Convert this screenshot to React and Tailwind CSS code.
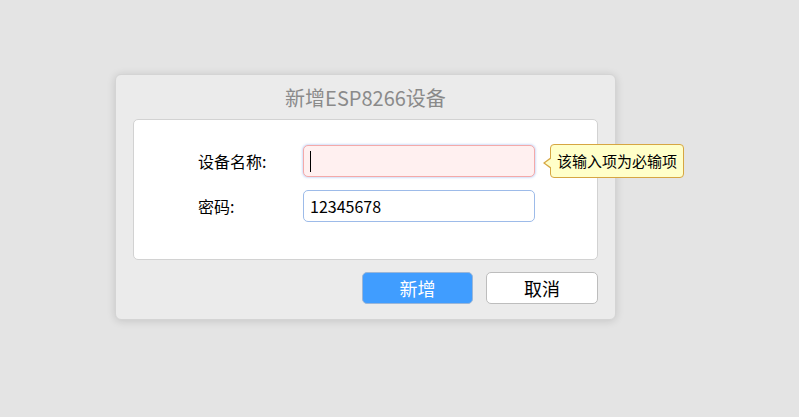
export default function App() {
  return (
    <div
      className="min-h-[417px] w-full bg-[#e4e4e4] pl-[115px] pt-[74px]"
      style={{ fontFamily: '"Noto Sans CJK SC", "Noto Sans", sans-serif' }}
    >
      <div className="w-[501px] h-[246px] rounded-[6px] border border-[#d4d4d4] bg-[#ebebeb] shadow-[0_1px_8px_rgba(0,0,0,0.14)] flex flex-col">
        <div className="h-[44px] flex items-center justify-center text-[20px] text-[#8a8a8a] leading-none pt-[2px]">
          新增ESP8266设备
        </div>

        <div className="mx-[17px] h-[141px] rounded-[5px] border border-[#d2d2d2] bg-white pt-[25px] pl-[64px] flex flex-col gap-[13px]">
          <div className="flex items-center">
            <label className="w-[105px] text-[16px] text-black">设备名称:</label>
            <div className="relative">
              <div className="w-[232px] h-[32px] rounded-[5px] border border-[#f4a9a9] bg-[#fff0f0] shadow-[0_0_2px_1px_rgba(120,160,235,0.35)] flex items-center pl-[6px]">
                <span className="w-[1px] h-[21px] bg-black" />
              </div>
              <div className="absolute left-[247px] top-[-1px] h-[34px] rounded-[4px] border border-[#d6a642] bg-[#ffffc9] px-[6px] flex items-center whitespace-nowrap text-[15px] text-black">
                <span className="absolute left-[-8px] top-[12px] w-0 h-0 border-y-[6px] border-y-transparent border-r-[8px] border-r-[#d6a642]" />
                <span className="absolute left-[-6px] top-[13px] w-0 h-0 border-y-[5px] border-y-transparent border-r-[7px] border-r-[#ffffc9]" />
                该输入项为必输项
              </div>
            </div>
          </div>

          <div className="flex items-center">
            <label className="w-[105px] text-[16px] text-black">密码:</label>
            <input
              readOnly
              value="12345678"
              className="w-[232px] h-[32px] rounded-[5px] border border-[#9dbbe9] bg-white px-[6px] text-[16px] text-black outline-none"
            />
          </div>
        </div>

        <div className="mt-[12px] mr-[17px] flex justify-end gap-[13px]">
          <button className="w-[111px] h-[32px] rounded-[5px] border border-[#9ab6d8] bg-[#409dff] text-white text-[18px] leading-none">
            新增
          </button>
          <button className="w-[112px] h-[32px] rounded-[5px] border border-[#bdbdbd] bg-white text-black text-[18px] leading-none">
            取消
          </button>
        </div>
      </div>
    </div>
  );
}
